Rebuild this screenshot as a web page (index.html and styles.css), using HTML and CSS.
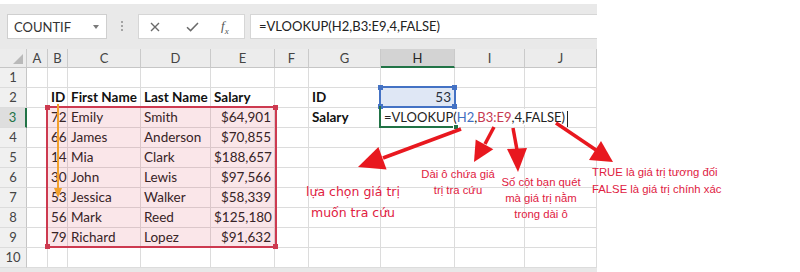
FILE: index.html
```html
<!DOCTYPE html>
<html lang="vi">

<head>
    <meta charset="UTF-8">
    <meta name="viewport" content="width=device-width, initial-scale=1.0">
    <title>VLOOKUP</title>
    <link rel="stylesheet" href="styles.css">
</head>

<body>
    <div class="screen">
        <div class="excel">
            <!-- formula bar -->
            <div class="formula-bar">
                <div class="name-box"><span>COUNTIF</span><span class="caret"></span></div>
                <div class="grip"></div>
                <div class="fx-buttons">
                    <svg class="icon-cancel" width="10" height="10" viewBox="0 0 10 10">
                        <path d="M1 1L9 9M9 1L1 9" stroke="#6a6a6a" stroke-width="1.4" fill="none" />
                    </svg>
                    <svg class="icon-enter" width="13" height="10" viewBox="0 0 13 10">
                        <path d="M1 5.2L4.6 8.6L12 1" stroke="#6a6a6a" stroke-width="1.5" fill="none" />
                    </svg>
                    <span class="fx"><i>f</i><sub>x</sub></span>
                </div>
                <div class="formula-input">=VLOOKUP(H2,B3:E9,4,FALSE)</div>
            </div>

            <!-- sheet -->
            <div class="sheet">
                <div class="row head">
                    <div class="corner"></div>
                    <div>A</div><div>B</div><div>C</div><div>D</div><div>E</div>
                    <div>F</div><div>G</div><div class="sel">H</div><div>I</div><div>J</div>
                </div>
                <div class="row">
                    <div class="rowh">1</div>
                    <div></div><div></div><div></div><div></div><div></div>
                    <div></div><div></div><div></div><div></div><div></div>
                </div>
                <div class="row">
                    <div class="rowh">2</div>
                    <div></div><div class="b">ID</div><div class="b">First Name</div><div class="b">Last Name</div><div class="b">Salary</div>
                    <div></div><div class="b">ID</div><div class="num">53</div><div></div><div></div>
                </div>
                <div class="row">
                    <div class="rowh sel">3</div>
                    <div></div><div class="num">72</div><div>Emily</div><div>Smith</div><div class="num">$64,901</div>
                    <div></div><div class="b">Salary</div>
                    <div class="spill"><span class="edit">=VLOOKUP(<span class="ref-blue">H2</span>,<span class="ref-red">B3:E9</span>,4,FALSE)<span class="cursor"></span></span></div>
                    <div></div><div></div>
                </div>
                <div class="row">
                    <div class="rowh">4</div>
                    <div></div><div class="num">66</div><div>James</div><div>Anderson</div><div class="num">$70,855</div>
                    <div></div><div></div><div></div><div></div><div></div>
                </div>
                <div class="row">
                    <div class="rowh">5</div>
                    <div></div><div class="num">14</div><div>Mia</div><div>Clark</div><div class="num">$188,657</div>
                    <div></div><div></div><div></div><div></div><div></div>
                </div>
                <div class="row">
                    <div class="rowh">6</div>
                    <div></div><div class="num">30</div><div>John</div><div>Lewis</div><div class="num">$97,566</div>
                    <div></div><div></div><div></div><div></div><div></div>
                </div>
                <div class="row">
                    <div class="rowh">7</div>
                    <div></div><div class="num">53</div><div>Jessica</div><div>Walker</div><div class="num">$58,339</div>
                    <div></div><div></div><div></div><div></div><div></div>
                </div>
                <div class="row">
                    <div class="rowh">8</div>
                    <div></div><div class="num">56</div><div>Mark</div><div>Reed</div><div class="num">$125,180</div>
                    <div></div><div></div><div></div><div></div><div></div>
                </div>
                <div class="row">
                    <div class="rowh">9</div>
                    <div></div><div class="num">79</div><div>Richard</div><div>Lopez</div><div class="num">$91,632</div>
                    <div></div><div></div><div></div><div></div><div></div>
                </div>
                <div class="row">
                    <div class="rowh">10</div>
                    <div></div><div></div><div></div><div></div><div></div>
                    <div></div><div></div><div></div><div></div><div></div>
                </div>
                <div class="sheet-foot"></div>

                <!-- selections drawn over the cells -->
                <div class="range range-red">
                    <span class="handle tl"></span><span class="handle tr"></span>
                    <span class="handle bl"></span><span class="handle br"></span>
                </div>
                <div class="range range-blue">
                    <span class="handle tl"></span><span class="handle tr"></span>
                    <span class="handle bl"></span><span class="handle br"></span>
                </div>
                <div class="active-cell"><span class="fill-handle"></span></div>

                <svg class="scan-arrow" width="12" height="100" viewBox="0 0 12 100">
                    <path d="M6 0V86" stroke="#f2a02c" stroke-width="2" />
                    <path d="M6 94L2 84H10Z" fill="#f2a02c" />
                </svg>
            </div>
        </div>

        <!-- red callouts -->
        <svg class="callouts" width="800" height="272" viewBox="0 0 800 272">
            <g stroke="#e8181f" stroke-width="3.5" fill="none">
                <path d="M461 129L383 158" />
                <path d="M494 127L485 144" />
                <path d="M513 128L517 150" />
                <path d="M556 123L596 150" />
            </g>
            <g fill="#e8181f">
                <path d="M358 167L378.4 146.9L386.6 169.5Z" />
                <path d="M474 162L475.7 139.6L493.3 149.2Z" />
                <path d="M518 172L507 149L527 148Z" />
                <path d="M613 162L601 141L589 160Z" />
            </g>
        </svg>

        <div class="note note-lookup">lựa chọn giá trị<br>muốn tra cứu</div>
        <div class="note note-range">Dài ô chứa giá<br>trị tra cứu</div>
        <div class="note note-col">Số cột bạn quét<br>mà giá trị nằm<br>trong dài ô</div>
        <div class="note note-bool">TRUE là giá trị tương đối<br>FALSE là giá trị chính xác</div>
    </div>
</body>

</html>
```

FILE: styles.css
```css
* {
    box-sizing: border-box;
}

body {
    margin: 0;
    background: #fff;
    font-family: Lato, "Liberation Sans", sans-serif;
    color: #222;
}

.screen {
    position: relative;
    width: 800px;
    height: 272px;
    overflow: hidden;
}

.excel {
    width: 597px;
}

/* Formula bar */
.formula-bar {
    display: flex;
    align-items: center;
    height: 45px;
    margin-top: 4px;
    padding-left: 7px;
    background: #e9e9e9;
}

.name-box {
    display: flex;
    align-items: center;
    justify-content: space-between;
    width: 100px;
    height: 25px;
    padding: 0 7px 0 6px;
    background: #fff;
    border: 1px solid #cfcfcf;
    font-size: 13px;
    color: #333;
}

.caret {
    border-left: 3px solid transparent;
    border-right: 3px solid transparent;
    border-top: 4px solid #7a7a7a;
}

.grip {
    width: 2px;
    height: 12px;
    margin: 0 15px 0 14px;
    background: repeating-linear-gradient(#a4a4a4 0 2px, transparent 2px 4px);
}

.fx-buttons {
    display: flex;
    align-items: center;
    width: 107px;
    height: 25px;
    padding-left: 11px;
    background: #fff;
    border: 1px solid #d6d6d6;
}

.icon-enter {
    margin-left: 26px;
}

.fx {
    margin-left: 22px;
    font-family: "Liberation Serif", serif;
    font-size: 13px;
    color: #555;
}

.fx sub {
    font-size: 9px;
    font-style: italic;
}

.formula-input {
    flex: 1;
    height: 25px;
    margin-left: 5px;
    padding-left: 8px;
    background: #fff;
    border: 1px solid #d6d6d6;
    border-right: none;
    font-size: 13px;
    line-height: 23px;
    color: #222;
}

/* Sheet */
.sheet {
    position: relative;
}

.row {
    display: grid;
    grid-template-columns: 27px 21px 20px 73px 70px 64px 34px 72px 74px 70px 72px;
    height: 20px;
}

.row > div {
    padding: 0 3px;
    border-right: 1px solid #dcdcdc;
    border-bottom: 1px solid #dcdcdc;
    font-size: 13.5px;
    line-height: 19px;
    white-space: nowrap;
    overflow: hidden;
}

.row.head {
    height: 19px;
    background: #ececec;
}

.row.head > div {
    text-align: center;
    color: #444;
    font-size: 13px;
    line-height: 18px;
    border-right-color: #cacaca;
    border-bottom-color: #c6c6c6;
}

.row.head > .sel {
    background: #d3d3d3;
    border-bottom: 2px solid #217346;
    color: #262626;
}

.row.head > .corner {
    position: relative;
}

.row.head > .corner::after {
    content: "";
    position: absolute;
    right: 3px;
    bottom: 3px;
    border-left: 10px solid transparent;
    border-bottom: 10px solid #b9b9b9;
}

.row > .rowh {
    padding: 0;
    background: #f0f0f0;
    text-align: center;
    color: #444;
    font-size: 13px;
    border-right-color: #c6c6c6;
}

.row > .rowh.sel {
    background: #dedede;
    color: #217346;
    border-right: 2px solid #217346;
}

.row > .b {
    font-weight: bold;
    color: #111;
}

.row > .num {
    text-align: right;
}

.row > .spill {
    overflow: visible;
    font-size: 13px;
}

.edit {
    position: relative;
    z-index: 1;
    padding-right: 4px;
    background: #fff;
}

.ref-blue {
    color: #3f6fc0;
}

.ref-red {
    color: #c73a52;
}

.cursor {
    display: inline-block;
    width: 1px;
    height: 16px;
    margin-left: 2px;
    vertical-align: middle;
    background: #222;
}

.sheet-foot {
    height: 4px;
    background: #e8e8e8;
}

/* Selections */
.range {
    position: absolute;
    z-index: 2;
    border: 2px solid;
}

.range-red {
    top: 57px;
    left: 46px;
    width: 231px;
    height: 142px;
    border-color: #cd3a50;
    background: rgba(214, 52, 78, 0.12);
}

.range-blue {
    top: 37px;
    left: 379px;
    width: 77px;
    height: 22px;
    border-color: #4472c4;
    background: rgba(68, 114, 196, 0.17);
}

.handle {
    position: absolute;
    width: 5px;
    height: 5px;
}

.range-red .handle {
    background: #cd3a50;
}

.range-blue .handle {
    background: #4472c4;
}

.handle.tl { top: -3px; left: -3px; }
.handle.tr { top: -3px; right: -3px; }
.handle.bl { bottom: -3px; left: -3px; }
.handle.br { bottom: -3px; right: -3px; }

.active-cell {
    position: absolute;
    z-index: 2;
    top: 57px;
    left: 379px;
    width: 77px;
    height: 22px;
    border: 2px solid #217346;
    border-top: none;
    border-right: none;
}

.fill-handle {
    position: absolute;
    right: -3px;
    bottom: -4px;
    width: 6px;
    height: 6px;
    background: #217346;
    border: 1px solid #fff;
}

.scan-arrow {
    position: absolute;
    z-index: 3;
    top: 55px;
    left: 52px;
}

/* Callouts */
.callouts {
    position: absolute;
    top: 0;
    left: 0;
    z-index: 4;
    pointer-events: none;
}

.note {
    position: absolute;
    z-index: 5;
    color: #e0213f;
    font-family: "Liberation Sans", Arial, sans-serif;
    font-size: 11.3px;
    white-space: nowrap;
}

.note-lookup {
    top: 181px;
    left: 303px;
    width: 100px;
    text-align: center;
    font-family: "DejaVu Sans", sans-serif;
    font-size: 12.5px;
    line-height: 21px;
}

.note-range {
    top: 166px;
    left: 408px;
    width: 100px;
    text-align: center;
    line-height: 16px;
}

.note-col {
    top: 174px;
    left: 491px;
    width: 100px;
    text-align: center;
    line-height: 16px;
}

.note-bool {
    top: 164px;
    left: 592px;
    line-height: 17px;
}
```
